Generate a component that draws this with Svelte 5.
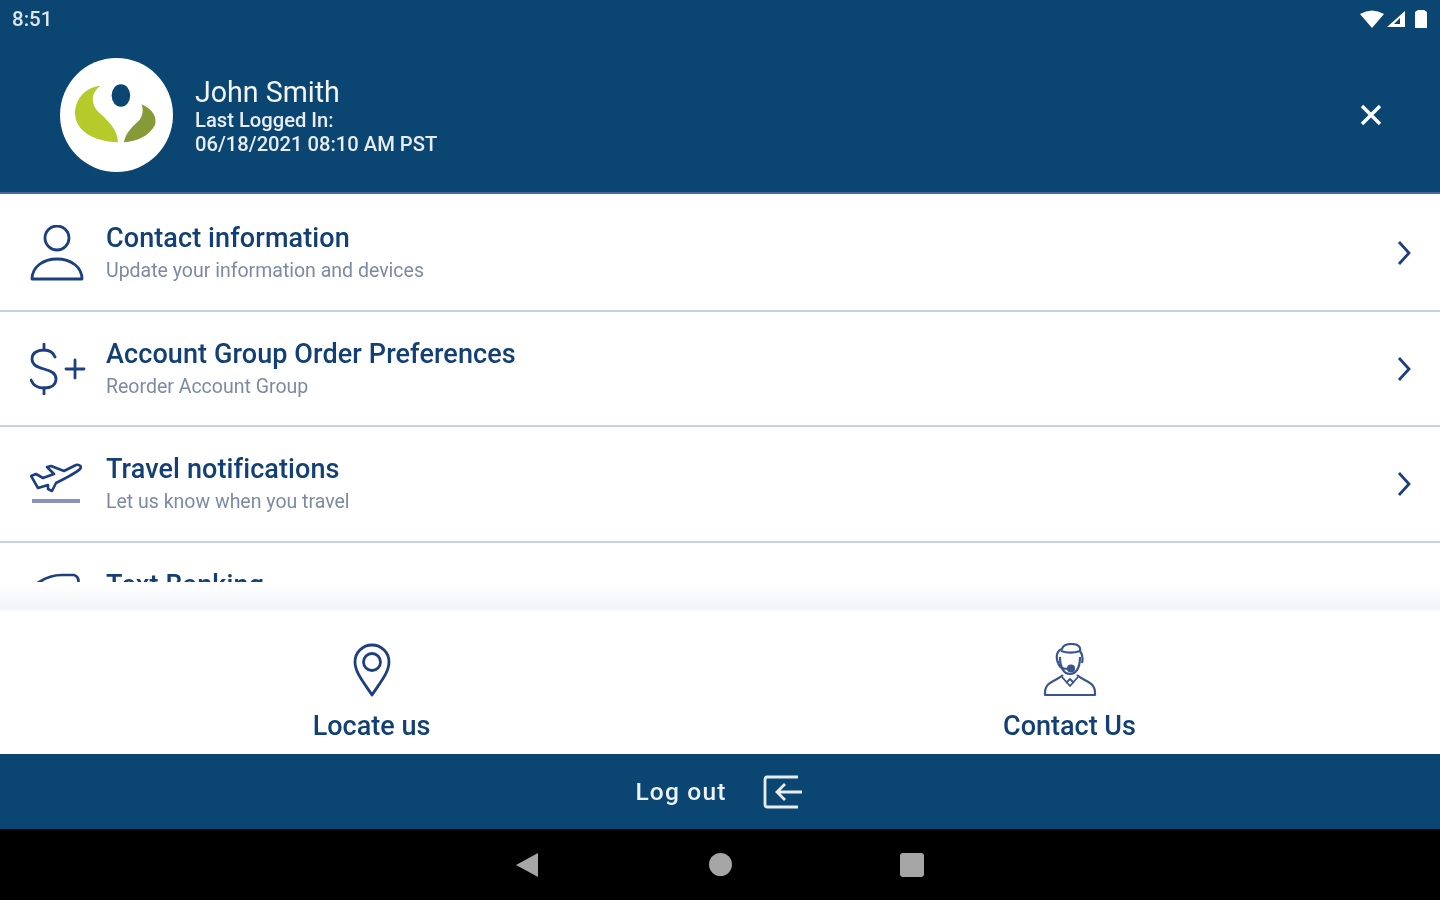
<script>
	const rows = [
		{ icon: 'person', title: 'Contact information', sub: 'Update your information and devices' },
		{ icon: 'dollar', title: 'Account Group Order Preferences', sub: 'Reorder Account Group' },
		{ icon: 'plane', title: 'Travel notifications', sub: 'Let us know when you travel' },
		{ icon: 'card', title: 'Text Banking', sub: 'Manage text alerts' }
	];
</script>

<main class="screen">
	<header class="top">
		<div class="status">
			<span class="time">8:51</span>
			<div class="status-icons">
				<svg width="24" height="18" viewBox="0 0 24 18"><path d="M0 4 Q12 -3 24 4 L12 18 Z" fill="#fff" /></svg>
				<svg width="20" height="18" viewBox="0 0 20 18"><path d="M19 1 V17 H1 Z" fill="#fff" /><path d="M14 8 V14 H8 Z" fill="#0b4673" /></svg>
				<svg class="battery" width="14" height="20" viewBox="0 0 14 20"><path d="M4 1 H10 L13 3 V19 H1 V3 Z" fill="#fff" /></svg>
			</div>
		</div>
		<div class="profile">
			<div class="avatar">
				<svg width="84" height="62" viewBox="0 0 86 62">
					<path d="M26 1 C8 3 0 17 0 30 C1 47 18 58 44 59 C44 46 33 36 24 28 C16 20 16 8 26 1 Z" fill="#b5cb2b" />
					<path d="M68 20 C80 25 84 34 82 41 C76 53 63 58 50 59 C52 48 60 42 66 36 C70 31 70 25 68 20 Z" fill="#869a38" />
					<ellipse cx="47" cy="11" rx="9.5" ry="11.5" fill="#0b4673" />
				</svg>
			</div>
			<div class="who">
				<div class="name">John Smith</div>
				<div class="last">Last Logged In:</div>
				<div class="when">06/18/2021 08:10 AM PST</div>
			</div>
			<svg class="close" width="24" height="24" viewBox="0 0 24 24"><path d="M3 3 L21 21 M21 3 L3 21" stroke="#fff" stroke-width="3.4" /></svg>
		</div>
	</header>

	<section class="list">
		{#each rows as row}
			<div class="row">
				<div class="row-icon">
					{#if row.icon === 'person'}
						<svg width="54" height="56" viewBox="0 0 54 56" fill="none" stroke="#1d3f80" stroke-width="2.8">
							<circle cx="27" cy="13" r="12" />
							<path d="M2 54 C2 42 13 34 27 34 C41 34 52 42 52 54 Z" stroke-linejoin="round" />
						</svg>
					{:else if row.icon === 'dollar'}
						<svg width="56" height="52" viewBox="0 0 56 52" fill="none" stroke="#1d3f80" stroke-width="2.8" stroke-linecap="round">
							<path d="M25 14 C23 9 19 7 14 7 C7 7 2 10 2 16 C2 22 7 24 14 26 C21 28 26 30 26 36 C26 42 21 45 14 45 C8 45 3 42 1 37" />
							<path d="M14 1 V7 M14 45 V51" />
							<path d="M36 26 H54 M45 17 V35" />
						</svg>
					{:else if row.icon === 'plane'}
						<svg width="52" height="42" viewBox="0 0 52 42" fill="none" stroke="#1d3f80" stroke-width="2.6" stroke-linejoin="round">
							<path d="M1 13 L6 11 L13 15 L24 11 L17 4 L21 3 L34 8 L46 2 C50 1 52 4 50 6 C46 10 34 16 26 20 L22 28 L18 26 L18 22 L8 25 Z" />
							<path d="M2 38 H50" stroke="#8a95b5" stroke-width="4" />
						</svg>
					{:else}
						<svg width="52" height="54" viewBox="0 0 52 54" fill="none" stroke="#1d3f80" stroke-width="2.6">
							<path d="M9 9 Q20 2 32 2 H44 Q50 4 48 12 Q44 16 30 14 Z" />
						</svg>
					{/if}
				</div>
				<div class="row-text">
					<div class="title">{row.title}</div>
					<div class="sub">{row.sub}</div>
				</div>
				<svg class="chev" width="14" height="26" viewBox="0 0 14 26" fill="none"><path d="M2 2 L12 13 L2 24" stroke="#1d3f80" stroke-width="2.8" /></svg>
			</div>
		{/each}
	</section>

	<section class="quick">
		<div class="quick-item">
			<svg width="38" height="54" viewBox="0 0 38 54" fill="none" stroke="#1d3f80" stroke-width="2.8">
				<path d="M19 52 C12 41 2 30 2 19 C2 9 10 2 19 2 C28 2 36 9 36 19 C36 30 26 41 19 52 Z" stroke-linejoin="round" />
				<circle cx="19" cy="19" r="8.5" />
			</svg>
			<span>Locate us</span>
		</div>
		<div class="quick-item">
			<svg width="54" height="54" viewBox="0 0 54 54" fill="none" stroke="#3a5490" stroke-width="2.2" stroke-linejoin="round">
				<!-- hair and cap -->
				<path d="M15 20 C12 12 15 7 19 6 C20 2 24 1 29 1 C35 1 38 4 37 8 C40 12 40 16 39 20" />
				<path d="M18 8 C24 10 31 10 37 8" />
				<!-- face -->
				<path d="M17 14 C17 25 21 31 27 31 C33 31 37 25 37 14" />
				<!-- headset -->
				<path d="M15 18 C15 24 19 26 25 26" />
				<circle cx="28" cy="25.5" r="3" fill="#3a5490" />
				<!-- shoulders and collar -->
				<path d="M20 32 C14 38 2 38 2 50 V52 H52 V50 C52 38 40 38 34 32" />
				<path d="M19 34 L27 43 L35 34 M23 40 L27 36 L31 40" stroke-width="1.8" />
			</svg>
			<span>Contact Us</span>
		</div>
	</section>

	<section class="logout">
		<span>Log out</span>
		<svg width="40" height="34" viewBox="0 0 40 34" fill="none" stroke="#e8edf2" stroke-width="2.8">
			<path d="M35 2 H4 Q2 2 2 5 V29 Q2 32 4 32 H35" />
			<path d="M39 17 H15 M22 9 L14 17 L22 25" />
		</svg>
	</section>

	<nav class="softkeys">
		<svg class="back" width="24" height="26" viewBox="0 0 24 26"><path d="M1 13 L23 1 V25 Z" fill="#a6a6a6" /></svg>
		<div class="dot"></div>
		<div class="square"></div>
	</nav>
</main>

<style>
	:global(body) {
		margin: 0;
		padding: 0;
		overflow: hidden;
		font-family: Roboto, 'Liberation Sans', sans-serif;
	}

	.screen {
		width: 1440px;
		height: 900px;
		display: flex;
		flex-direction: column;
		background: #fff;
		filter: blur(0.6px); /* the reference is a soft upscale */
	}

	.top {
		height: 194px;
		background: #0b4673;
		color: #fff;
		border-bottom: 2px solid #4a6a9a;
		box-sizing: border-box;
		display: flex;
		flex-direction: column;
	}

	.status {
		display: flex;
		justify-content: space-between;
		align-items: center;
		padding: 6px 12px 0 12px;
		height: 26px;
	}

	.time {
		font-size: 20.5px;
		font-weight: 500;
		color: #dfe6ec;
	}

	.status-icons {
		display: flex;
		align-items: center;
		gap: 2px;
	}

	.battery {
		margin-left: 6px;
	}

	.profile {
		display: flex;
		align-items: center;
		padding: 26px 57px 0 60px;
	}

	.avatar {
		width: 113px;
		height: 114px;
		border-radius: 50%;
		background: #fff;
		display: flex;
		align-items: center;
		justify-content: center;
		flex-shrink: 0;
	}

	.who {
		margin-left: 22px;
		flex: 1;
	}

	.name {
		font-size: 28.6px;
		line-height: 34px;
		color: #f2f5f8;
	}

	.last,
	.when {
		font-size: 20.2px;
		font-weight: 500;
		line-height: 24px;
		color: #e8edf2;
		margin-top: -1px;
	}

	.when {
		margin-top: 0;
	}

	.list {
		height: 388px;
		padding-top: 2px;
		box-sizing: border-box;
		overflow: hidden;
		flex-shrink: 0;
	}

	.row {
		height: 115.7px;
		box-sizing: border-box;
		border-bottom: 2px solid #c5d1e3;
		display: flex;
		align-items: center;
		padding: 0 29px 0 30px;
	}

	.row-icon {
		width: 76px;
		display: flex;
		align-items: center;
	}

	.row-text {
		flex: 1;
	}

	.title {
		font-size: 27px;
		font-weight: 500;
		letter-spacing: 0.1px;
		line-height: 34px;
		color: #123f75;
	}

	.sub {
		font-size: 19.5px;
		line-height: 28px;
		margin-top: 2px;
		color: #7c8aa3;
	}

	.quick {
		height: 172px;
		box-sizing: border-box;
		display: grid;
		grid-template-columns: 743px 653px;
		background: linear-gradient(#fff 0, #f1f4f8 27px, #fff 30px);
	}

	.quick-item {
		display: flex;
		flex-direction: column;
		align-items: center;
		padding-top: 61px;
		gap: 13px;
		font-size: 27px;
		font-weight: 500;
		color: #123f75;
	}

	.logout {
		height: 75px;
		background: #0b4673;
		color: #eef2f6;
		display: flex;
		align-items: center;
		justify-content: center;
		gap: 36px;
		font-size: 24.5px;
		font-weight: 500;
		letter-spacing: 1.2px;
		padding-right: 2px;
	}

	.softkeys {
		height: 71px;
		background: #000;
		display: flex;
		align-items: center;
		justify-content: center;
		gap: 168px;
	}

	.back {
		margin-left: -2px;
		margin-right: 2px;
	}

	.dot {
		width: 23px;
		height: 23px;
		border-radius: 50%;
		background: #a6a6a6;
	}

	.square {
		width: 24px;
		height: 24px;
		border-radius: 3px;
		background: #a6a6a6;
	}
</style>
